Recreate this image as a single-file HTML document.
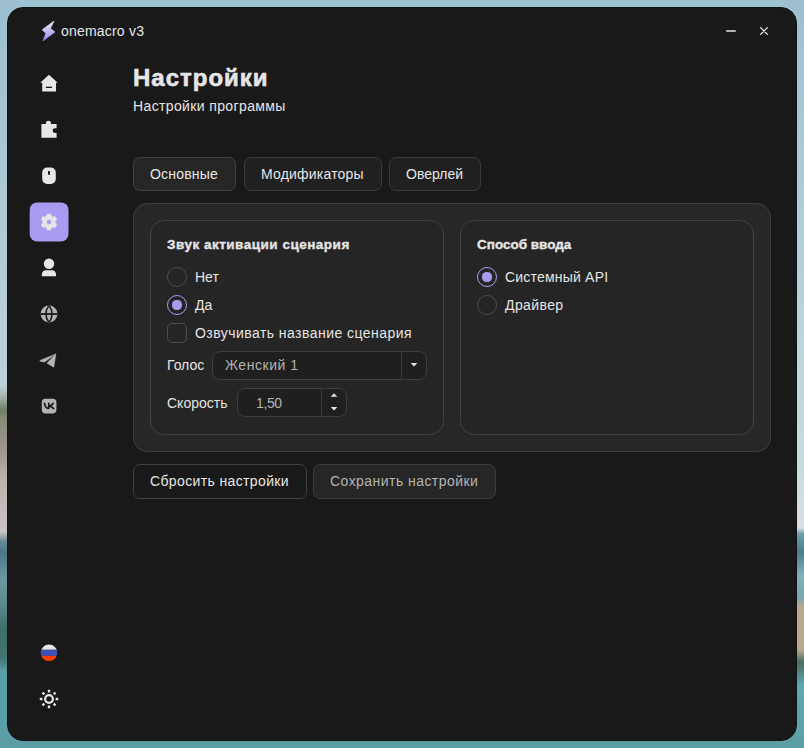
<!DOCTYPE html>
<html><head><meta charset="utf-8">
<style>
*{margin:0;padding:0;box-sizing:border-box}
html,body{width:804px;height:748px;overflow:hidden}
body{position:relative;font-family:"Liberation Sans",sans-serif;background:#9ec3d3}
.bgl{position:absolute;left:0;top:0;width:20px;height:748px;background:linear-gradient(to bottom,#9cc0d0 0px,#bcd2da 385px,#a8b4b4 396px,#6e8266 410px,#8a8a7a 420px,#9c968e 450px,#bcb4b0 480px,#cac4c4 532px,#6a8a98 541px,#4a7888 552px,#6a98a0 578px,#5e8e90 600px,#3e6e6a 630px,#427470 658px,#5a9ea8 672px,#5aa0a8 748px)}
.bgr{position:absolute;right:0;top:0;width:20px;height:748px;background:linear-gradient(to bottom,#9cc0d0 0px,#c8dce0 470px,#d8e0e4 528px,#6aa0aa 534px,#4a7d88 552px,#80b0b8 575px,#7aa8b0 598px,#b8a890 606px,#b8a890 650px,#4a6a60 662px,#60a8b0 685px,#5aa0a8 748px)}
.bgb{position:absolute;left:0;bottom:0;width:804px;height:12px;background:#5a9ea3}
.win{position:absolute;left:7px;top:7px;width:790px;height:734px;border-radius:16px;background:#191919;border:1px solid #131313}
.abs{position:absolute}
.t{position:absolute;white-space:nowrap;color:#e6e6e6;font-size:14px;line-height:20px}
.box{position:absolute;border:1px solid #383838;background:#252525}
.radio{position:absolute;width:20px;height:20px;border-radius:50%;border:1.5px solid #4d4d4d}
.radio.on{border-color:#a99cf0}
.radio.on::after{content:"";position:absolute;left:50%;top:50%;width:9.2px;height:9.2px;margin:-4.6px 0 0 -4.6px;border-radius:50%;background:#a99cf0}
</style></head><body>
<div class="bgl"></div><div class="bgr"></div><div class="bgb"></div>
<div class="win">
</div>

<!-- title bar -->
<svg class="abs" style="left:38px;top:18px" width="22" height="26" viewBox="0 0 22 26">
<defs><linearGradient id="lg" x1="0" y1="0" x2="0" y2="1"><stop offset="0" stop-color="#f0eefc"/><stop offset="0.5" stop-color="#c3b9f4"/><stop offset="1" stop-color="#9585ee"/></linearGradient></defs>
<path d="M16 3.1 L4 11.8 L7.8 15.3 L5 22.9 L17 13.9 L12.5 10.4 Z" fill="url(#lg)" stroke="url(#lg)" stroke-width="0.6" stroke-linejoin="round"/>
</svg>
<div class="t" style="left:61px;top:21px;font-size:14px;letter-spacing:0.2px">onemacro v3</div>
<div class="abs" style="left:726px;top:30px;width:10px;height:2px;background:#b4b4b4;border-radius:1px"></div>
<svg class="abs" style="left:758px;top:25px" width="12" height="12" viewBox="0 0 12 12"><path d="M2.6 2.6 L9.4 9.4 M9.4 2.6 L2.6 9.4" stroke="#e6e6e6" stroke-width="1.3" stroke-linecap="round"/></svg>

<!-- sidebar -->
<svg class="abs" style="left:39px;top:73px" width="20" height="20" viewBox="0 0 20 20">
<path d="M10 1.7 L18.7 9.7 L17 9.7 L17 18.5 L3.2 18.5 L3.2 9.7 L1.2 9.7 Z" fill="#e6e6e6"/>
<rect x="6.9" y="13.7" width="6.1" height="1.3" fill="#191919"/>
</svg>
<svg class="abs" style="left:39px;top:119px" width="20" height="20" viewBox="0 0 20 20">
<path d="M2.4 4.9 H6.9 V4.2 A2.5 2.5 0 0 1 12 4.2 V4.9 H17.6 V9.2 H16 A2.4 2.4 0 0 0 16 14 H17.6 V18.8 H2.4 Z" fill="#e6e6e6"/>
</svg>
<svg class="abs" style="left:39px;top:165px" width="20" height="20" viewBox="0 0 20 20">
<rect x="3.2" y="2.5" width="13.6" height="16.5" rx="5" fill="#e6e6e6"/>
<rect x="9" y="6" width="2" height="3.7" rx="0.5" fill="#191919"/>
</svg>
<svg class="abs" style="left:20px;top:195px" width="60" height="55" viewBox="0 0 60 55"><rect x="9.7" y="7.4" width="38.8" height="39" rx="7.5" fill="#a99cf0"/></svg>
<svg class="abs" style="left:38px;top:211px" width="22" height="22" viewBox="0 0 22 22">
<path fill-rule="evenodd" d="M8.70 5.10 L9.15 3.00 L12.85 3.00 L13.30 5.10 L14.96 6.06 L17.00 5.40 L18.85 8.60 L17.26 10.04 L17.26 11.96 L18.85 13.40 L17.00 16.60 L14.96 15.94 L13.30 16.90 L12.85 19.00 L9.15 19.00 L8.70 16.90 L7.04 15.94 L5.00 16.60 L3.15 13.40 L4.74 11.96 L4.74 10.04 L3.15 8.60 L5.00 5.40 L7.04 6.06 Z M11 8.5 A2.5 2.5 0 1 0 11 13.5 A2.5 2.5 0 1 0 11 8.5 Z" fill="#e6e6e6" stroke="#e6e6e6" stroke-width="0.5" stroke-linejoin="round"/>
</svg>
<svg class="abs" style="left:39px;top:257px" width="20" height="20" viewBox="0 0 20 20">
<circle cx="10" cy="6.8" r="5.2" fill="#e6e6e6"/>
<path d="M2.9 19.3 V17.5 A4 4 0 0 1 6.9 13.2 H13 A4 4 0 0 1 17 17.5 V19.3 Z" fill="#e6e6e6"/>
</svg>
<svg class="abs" style="left:39px;top:304px" width="20" height="20" viewBox="0 0 20 20">
<defs><clipPath id="gc"><circle cx="10" cy="10" r="8.4"/></clipPath></defs>
<g clip-path="url(#gc)">
<rect x="0" y="0" width="20" height="20" fill="#b4b4b4"/>
<rect x="0" y="9.1" width="20" height="1.8" fill="#191919"/>
<path d="M10 1.4 Q3.8 10 10 18.6 Q16.2 10 10 1.4 Z" fill="none" stroke="#191919" stroke-width="1.5"/>
</g>
</svg>
<svg class="abs" style="left:38px;top:350px" width="20" height="20" viewBox="0 0 20 20">
<path d="M1.9 10.4 L17.9 3.9 L13.5 7.1 L6.8 12 Q3 11.6 1.9 10.9 Z" fill="#b4b4b4" stroke="#b4b4b4" stroke-width="0.5" stroke-linejoin="round"/>
<path d="M17.9 3.9 L15.8 17.3 L9 13.2 L14.3 7.6 Z" fill="#b4b4b4" stroke="#b4b4b4" stroke-width="0.5" stroke-linejoin="round"/>
</svg>
<svg class="abs" style="left:38px;top:396px" width="22" height="22" viewBox="0 0 22 22">
<rect x="3.8" y="2.8" width="14.6" height="14.6" rx="3.6" fill="#b4b4b4"/>
<path d="M6.4 7.3 Q7.6 12.3 10.2 12.4 M10.8 7.3 V12.3 M15.2 7.3 Q13.9 9.7 11.2 10.1 M11.6 10.1 Q14.1 10.8 15.6 12.6" fill="none" stroke="#191919" stroke-width="1.7" stroke-linecap="round" stroke-linejoin="round"/>
</svg>
<svg class="abs" style="left:39px;top:643px" width="20" height="20" viewBox="0 0 20 20">
<defs><clipPath id="fc"><circle cx="10" cy="9.8" r="8.3"/></clipPath></defs>
<g clip-path="url(#fc)">
<rect x="0" y="0" width="20" height="6.8" fill="#e6e6e6"/>
<rect x="0" y="6.8" width="20" height="6.1" fill="#3f51b5"/>
<rect x="0" y="12.9" width="20" height="8" fill="#ff3d00"/>
</g>
</svg>
<svg class="abs" style="left:39px;top:689px" width="20" height="20" viewBox="0 0 20 20">
<circle cx="10" cy="10" r="3.85" fill="none" stroke="#e6e6e6" stroke-width="2.2"/>
<g stroke="#e6e6e6" stroke-width="2.4">
<path d="M10 0.8 V3.4 M10 16.6 V19.2 M0.8 10 H3.4 M16.6 10 H19.2"/>
<path d="M3.5 3.5 L5.3 5.3 M16.5 3.5 L14.7 5.3 M3.5 16.5 L5.3 14.7 M16.5 16.5 L14.7 14.7"/>
</g>
</svg>

<!-- header -->
<div class="t" style="left:133px;top:63px;font-size:24px;line-height:29px;font-weight:700;letter-spacing:1px;-webkit-text-stroke:0.6px #e6e6e6">Настройки</div>
<div class="t" style="left:133px;top:96px;letter-spacing:0.37px">Настройки программы</div>

<!-- tabs -->
<div class="abs" style="left:133px;top:157px;width:103px;height:34px;border-radius:7px;border:1px solid #424242;background:#262626"></div>
<div class="abs" style="left:244px;top:157px;width:138px;height:34px;border-radius:7px;border:1px solid #3a3a3a;background:#202020"></div>
<div class="abs" style="left:389px;top:157px;width:92px;height:34px;border-radius:7px;border:1px solid #3a3a3a;background:#202020"></div>
<div class="t" style="left:150px;top:164px;letter-spacing:0.2px">Основные</div>
<div class="t" style="left:261px;top:164px;letter-spacing:0.2px">Модификаторы</div>
<div class="t" style="left:406px;top:164px">Оверлей</div>

<!-- panel -->
<div class="box" style="left:133px;top:203px;width:638px;height:249px;border-radius:14px;border-color:#3e3e3e;background:#272727"></div>
<div class="box" style="left:150px;top:220px;width:294px;height:215px;border-radius:14px;border-color:#414141"></div>
<div class="box" style="left:460px;top:220px;width:294px;height:215px;border-radius:14px;border-color:#414141"></div>

<div class="t" style="left:167px;top:235px;font-size:13.5px;font-weight:700;letter-spacing:0.5px;-webkit-text-stroke:0.35px #e6e6e6">Звук активации сценария</div>
<div class="radio" style="left:167px;top:267px"></div>
<div class="t" style="left:195px;top:267px">Нет</div>
<div class="radio on" style="left:167px;top:295px"></div>
<div class="t" style="left:195px;top:295px">Да</div>
<div class="abs" style="left:167px;top:323px;width:20px;height:20px;border-radius:5px;border:1.5px solid #4d4d4d"></div>
<div class="t" style="left:195px;top:323px;letter-spacing:0.45px">Озвучивать название сценария</div>
<div class="t" style="left:167px;top:355px">Голос</div>
<div class="abs" style="left:212px;top:351px;width:215px;height:29px;border-radius:8px;border:1px solid #3e3e3e;background:#1f1f1f"></div>
<div class="abs" style="left:401px;top:352px;width:1px;height:27px;background:#3e3e3e"></div>
<svg class="abs" style="left:410px;top:362px" width="8" height="6" viewBox="0 0 8 6"><path d="M0.7 1 H7.3 L4 4.6 Z" fill="#e6e6e6"/></svg>
<div class="t" style="left:225px;top:355px;color:#b4b4b4;letter-spacing:0.55px">Женский 1</div>
<div class="t" style="left:167px;top:393px">Скорость</div>
<div class="abs" style="left:237px;top:388px;width:110px;height:29px;border-radius:8px;border:1px solid #3e3e3e;background:#1f1f1f"></div>
<div class="abs" style="left:321px;top:389px;width:1px;height:12.6px;background:#3e3e3e"></div><div class="abs" style="left:321px;top:403px;width:1px;height:13px;background:#3e3e3e"></div>
<svg class="abs" style="left:330px;top:392px" width="8" height="6" viewBox="0 0 8 6"><path d="M0.7 4.8 H7.3 L4 1.2 Z" fill="#e6e6e6"/></svg>
<svg class="abs" style="left:330px;top:406px" width="8" height="6" viewBox="0 0 8 6"><path d="M0.7 1 H7.3 L4 4.6 Z" fill="#e6e6e6"/></svg>
<div class="t" style="left:256px;top:393px;color:#b4b4b4;letter-spacing:-0.4px">1,50</div>

<div class="t" style="left:477px;top:235px;font-size:13.5px;font-weight:700;letter-spacing:0px;-webkit-text-stroke:0.35px #e6e6e6">Способ ввода</div>
<div class="radio on" style="left:477px;top:267px"></div>
<div class="t" style="left:505px;top:267px;letter-spacing:0.2px">Системный API</div>
<div class="radio" style="left:477px;top:295px"></div>
<div class="t" style="left:505px;top:295px;letter-spacing:0.4px">Драйвер</div>

<!-- buttons -->
<div class="abs" style="left:133px;top:464px;width:174px;height:35px;border-radius:7px;border:1px solid #404040;background:#191919"></div>
<div class="t" style="left:150px;top:471px;letter-spacing:0.37px">Сбросить настройки</div>
<div class="abs" style="left:313px;top:464px;width:183px;height:35px;border-radius:7px;border:1px solid #3a3a3a;background:#262626"></div>
<div class="t" style="left:330px;top:471px;color:#b4b4b4;letter-spacing:0.45px">Сохранить настройки</div>
</body></html>
